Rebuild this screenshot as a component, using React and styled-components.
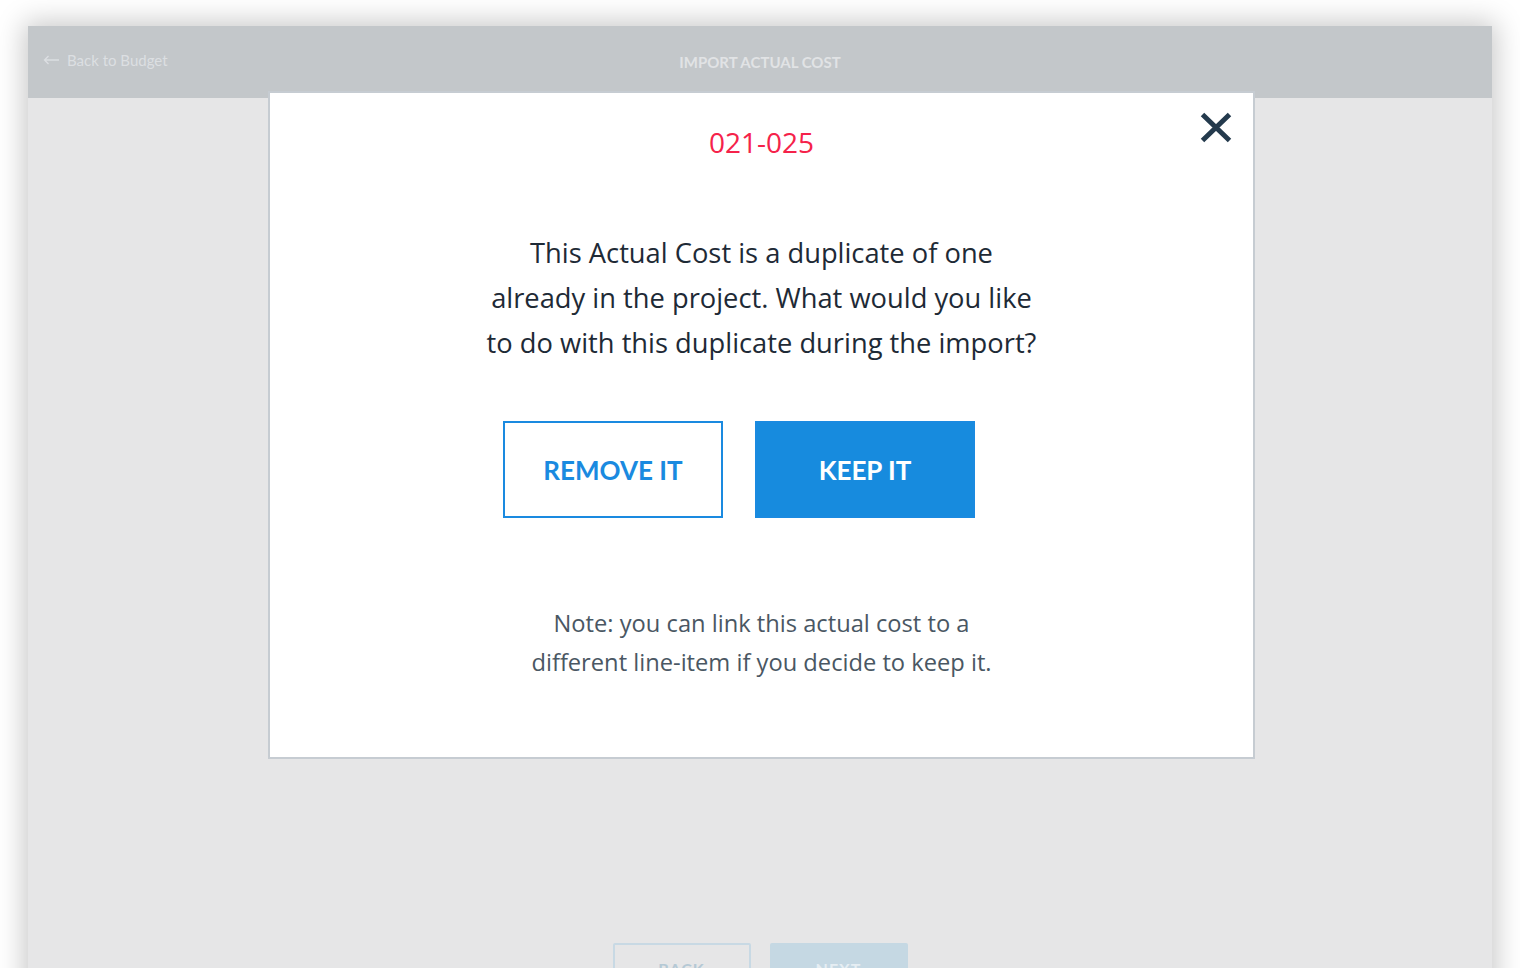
import React from "react";
import styled, { createGlobalStyle } from "styled-components";

const Global = createGlobalStyle`
  html, body { margin: 0; padding: 0; background: #ffffff; overflow: hidden; }
  body { font-family: "Open Sans", "Liberation Sans", sans-serif; }
  * { box-sizing: border-box; }
`;

const Frame = styled.div`
  position: relative;
  margin: 26px 28px 0;
  width: 1464px;
  background: #e6e6e7;
  box-shadow: 0 0 26px 4px rgba(0, 0, 0, 0.22);
`;

const Header = styled.header`
  height: 72px;
  background: #c3c7ca;
  display: grid;
  grid-template-columns: 1fr auto 1fr;
  align-items: center;
  padding: 0 15px;
  font-family: Lato, "Liberation Sans", sans-serif;
`;

const BackLink = styled.a`
  display: flex;
  align-items: center;
  gap: 7px;
  color: #dcdfe2;
  font-size: 15px;
  text-decoration: none;
  margin-top: -4px;
`;

const HeaderTitle = styled.h1`
  margin: 0;
  font-size: 15px;
  font-weight: 700;
  color: #e1e3e5;
  text-transform: uppercase;
`;

const Content = styled.main`
  height: 912px;
  display: flex;
  flex-direction: column;
  justify-content: flex-end;
  align-items: center;
  padding-bottom: 19px;
`;

const FooterActions = styled.div`
  display: flex;
  gap: 19px;
`;

const FooterButton = styled.button`
  width: 138px;
  height: 48px;
  border-radius: 2px;
  font-family: Lato, "Liberation Sans", sans-serif;
  font-size: 16px;
  font-weight: 700;
  letter-spacing: 1px;
  padding-top: 4px;
  border: 2px solid ${(p) => (p.$primary ? "#c5d8e3" : "#c8d9e4")};
  background: ${(p) => (p.$primary ? "#c5d8e3" : "transparent")};
  color: ${(p) => (p.$primary ? "#e6eef3" : "#b5c9d5")};
`;

const Modal = styled.div`
  position: absolute;
  top: 65px;
  left: 240px;
  width: 987px;
  background: #ffffff;
  border: 2px solid #c6ccd2;
  display: flex;
  flex-direction: column;
  align-items: center;
  padding: 29px 0 75px;
  text-align: center;
`;

const Close = styled.button`
  position: absolute;
  top: 17px;
  right: 19px;
  width: 36px;
  height: 35px;
  padding: 2px;
  border: 0;
  background: transparent;
  display: flex;
  align-items: center;
  justify-content: center;
`;

const Code = styled.h2`
  margin: 0;
  font-size: 28px;
  line-height: 40px;
  font-weight: 500;
  color: #f5224a;
`;

const Message = styled.p`
  margin: 68px 0 0;
  width: 556px;
  font-size: 27.3px;
  line-height: 45px;
  color: #1e2a36;
`;

const Actions = styled.div`
  display: flex;
  gap: 32px;
  margin: 56px 45px 0 0;
`;

const ChoiceButton = styled.button`
  width: 220px;
  height: 97px;
  font-family: Lato, "Liberation Sans", sans-serif;
  font-size: 26px;
  font-weight: 700;
  border: 2px solid #1a8ae0;
  background: ${(p) => (p.$filled ? "#178bde" : "#ffffff")};
  color: ${(p) => (p.$filled ? "#ffffff" : "#1a8ae0")};
  cursor: pointer;
`;

const Note = styled.p`
  margin: 86px 0 0;
  width: 470px;
  font-size: 23.7px;
  line-height: 39px;
  color: #4a5763;
`;

export default function App() {
  return (
    <>
      <Global />
      <Frame>
        <Header>
          <BackLink href="#">
            <svg width="17" height="10" viewBox="0 0 17 10" fill="none">
              <path d="M16 5H1.5M5.5 1L1.5 5l4 4" stroke="#dcdfe2" strokeWidth="1.3" />
            </svg>
            Back to Budget
          </BackLink>
          <HeaderTitle>Import Actual Cost</HeaderTitle>
          <span />
        </Header>
        <Content>
          <FooterActions>
            <FooterButton>BACK</FooterButton>
            <FooterButton $primary>NEXT</FooterButton>
          </FooterActions>
        </Content>
        <Modal>
          <Close aria-label="Close">
            <svg width="32" height="31" viewBox="0 0 32 31">
              <path d="M2.5 2.5L29.5 28.5M29.5 2.5L2.5 28.5" stroke="#243a4d" strokeWidth="5" strokeLinecap="butt" />
            </svg>
          </Close>
          <Code>021-025</Code>
          <Message>
            This Actual Cost is a duplicate of one already in the project. What would you like to do with this duplicate during the import?
          </Message>
          <Actions>
            <ChoiceButton>REMOVE IT</ChoiceButton>
            <ChoiceButton $filled>KEEP IT</ChoiceButton>
          </Actions>
          <Note>
            Note: you can link this actual cost to a different line-item if you decide to keep it.
          </Note>
        </Modal>
      </Frame>
    </>
  );
}
